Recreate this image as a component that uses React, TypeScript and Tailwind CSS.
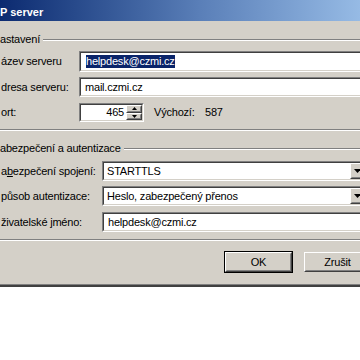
import React from 'react'

const sunkOuter = 'border border-t-[#808080] border-l-[#808080] border-b-white border-r-white'
const sunkInner = 'border border-t-[#404040] border-l-[#404040] border-b-[#d4d0c8] border-r-[#d4d0c8] bg-white'
const raisedOuter = 'border border-t-white border-l-white border-b-[#404040] border-r-[#404040] bg-[#d4d0c8]'
const raisedInner = 'border border-t-[#d4d0c8] border-l-[#d4d0c8] border-b-[#808080] border-r-[#808080]'

function Etch({ className = '' }: { className?: string }) {
  return <div className={'h-[2px] border-t border-b border-t-[#808080] border-b-white ' + className} />
}

function GroupTitle({ children }: { children: React.ReactNode }) {
  return (
    <div className="flex items-center h-[13px]">
      <span className="pr-[3px] whitespace-nowrap">{children}</span>
      <Etch className="flex-1" />
    </div>
  )
}

function Field({ width, height, children }: { width: number; height: string; children: React.ReactNode }) {
  return (
    <div className={sunkOuter + ' ' + height} style={{ width }}>
      <div className={sunkInner + ' h-full flex items-center overflow-hidden whitespace-nowrap'}>{children}</div>
    </div>
  )
}

function Combo({ value }: { value: string }) {
  return (
    <div className={sunkOuter + ' h-[20px] w-[266px]'}>
      <div className={sunkInner + ' h-full flex items-center'}>
        <span className="flex-1 pl-[3px] whitespace-nowrap">{value}</span>
        <div className={raisedOuter + ' w-[16px] h-full'}>
          <div className={raisedInner + ' h-full flex items-center pl-[2px]'}>
            <svg width="7" height="4" viewBox="0 0 7 4">
              <polygon points="0,0 7,0 3.5,4" fill="#000" />
            </svg>
          </div>
        </div>
      </div>
    </div>
  )
}

function SpinBtn({ up }: { up?: boolean }) {
  return (
    <div className={raisedOuter + ' h-1/2 w-full'}>
      <div className={raisedInner + ' h-full flex items-center justify-center'}>
        <svg width="5" height="3" viewBox="0 0 5 3" className={up ? 'rotate-180' : ''}>
          <polygon points="0,0 5,0 2.5,3" fill="#000" />
        </svg>
      </div>
    </div>
  )
}

export default function App() {
  return (
    <div className="w-[360px] h-[360px] overflow-hidden bg-white font-['Liberation_Sans',Arial,sans-serif] text-[11px] leading-[13px] text-black tracking-[-0.2px]">
      <div className="w-[400px]">
        <div className="h-[21px] pt-[6px] bg-linear-to-r from-[#0c2a70] via-[#5a7fb8] via-50% to-[#a6caf0] text-white font-bold tracking-normal">
          P server
        </div>

        <div className="h-[263px] bg-[#d4d0c8] pr-[10px] pt-[12px] flex flex-col">
          <GroupTitle>astavení</GroupTitle>

          <div className="pl-[1px] mt-[5px] flex items-center h-[21px]">
            <span className="w-[78px]">ázev serveru</span>
            <Field width={284} height="h-[21px]">
              <span className="ml-[5px] bg-[#0a246a] text-white">helpdesk@czmi.cz</span>
            </Field>
          </div>

          <div className="pl-[1px] mt-[5px] flex items-center h-[20px]">
            <span className="w-[78px]">dresa serveru:</span>
            <Field width={284} height="h-[20px]">
              <span className="pl-[4px]">mail.czmi.cz</span>
            </Field>
          </div>

          <div className="pl-[1px] mt-[6px] flex items-center h-[19px]">
            <span className="w-[78px]">ort:</span>
            <div className={sunkOuter + ' h-[19px] w-[65px]'}>
              <div className={sunkInner + ' h-full flex'}>
                <span className="flex-1 text-right pr-[2px] self-center">465</span>
                <div className="w-[16px] h-full flex flex-col">
                  <SpinBtn up />
                  <SpinBtn />
                </div>
              </div>
            </div>
            <span className="ml-[10px] w-[51px]">Výchozí:</span>
            <span>587</span>
          </div>

          <Etch className="mt-[7px]" />

          <div className="mt-[11px]">
            <GroupTitle>abezpečení a autentizace</GroupTitle>
          </div>

          <div className="pl-[1px] mt-[6px] flex items-center h-[20px]">
            <span className="w-[101px]">
              a<span className="underline">b</span>ezpečení spojení:
            </span>
            <Combo value="STARTTLS" />
          </div>

          <div className="pl-[1px] mt-[5px] flex items-center h-[20px]">
            <span className="w-[101px]">působ autentizace:</span>
            <Combo value="Heslo, zabezpečený přenos" />
          </div>

          <div className="pl-[1px] mt-[6px] flex items-center h-[20px]">
            <span className="w-[101px]">
              živatelské <span className="underline">j</span>méno:
            </span>
            <Field width={266} height="h-[20px]">
              <span className="pl-[4px]">helpdesk@czmi.cz</span>
            </Field>
          </div>

          <Etch className="mt-[7px]" />

          <div className="mt-[10px] flex items-start">
            <div className="ml-[224px] w-[69px] h-[22px] border border-black">
              <div className={raisedOuter + ' h-full'}>
                <div className={raisedInner + ' h-full flex items-center justify-center'}>OK</div>
              </div>
            </div>
            <div className={raisedOuter + ' ml-[11px] mt-[1px] w-[67px] h-[20px]'}>
              <div className={raisedInner + ' h-full flex items-center justify-center'}>Zrušit</div>
            </div>
          </div>
        </div>
        <div className="h-px bg-[#808080]" />
        <div className="h-[2px] bg-[#404040]" />
      </div>
    </div>
  )
}
